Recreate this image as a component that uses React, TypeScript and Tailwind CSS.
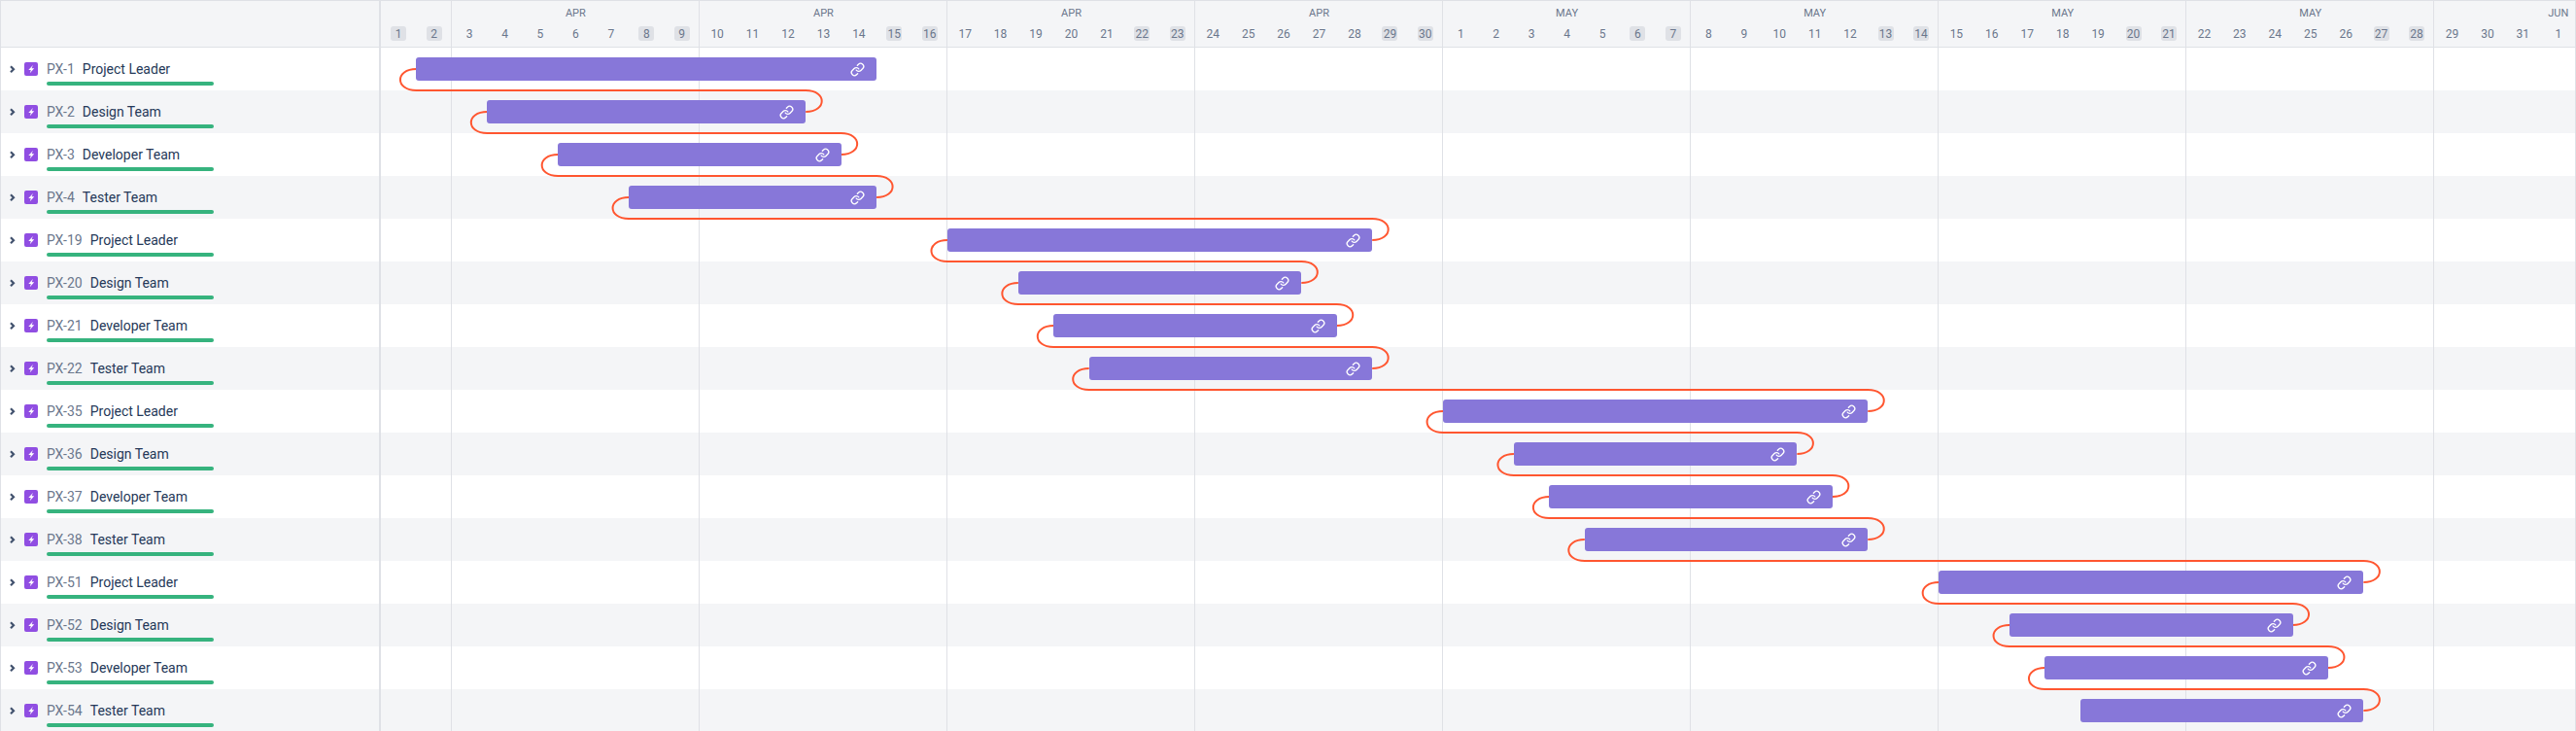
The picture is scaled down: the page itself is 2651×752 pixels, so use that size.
import { FC } from "react";
import { Link } from "lucide-react";

interface Task {
  id: number;
  name: string;
  start: number;
  end: number;
}

const DAY = 2259 / 62;
const ROW = 44;

const names = ["Project Leader", "Design Team", "Developer Team", "Tester Team"];
const ids = [1, 2, 3, 4, 19, 20, 21, 22, 35, 36, 37, 38, 51, 52, 53, 54];
const spans = [
  [1, 14], [3, 12], [5, 13], [7, 14],
  [16, 28], [18, 26], [19, 27], [20, 28],
  [30, 42], [32, 40], [33, 41], [34, 42],
  [44, 56], [46, 54], [47, 55], [48, 56],
];

const tasks: Task[] = ids.map((id, i) => ({
  id,
  name: names[i % 4],
  start: spans[i][0],
  end: spans[i][1],
}));

const weeks = [
  { label: "", days: ["1", "2"], off: ["1", "2"] },
  { label: "APR", days: ["3", "4", "5", "6", "7", "8", "9"], off: ["8", "9"] },
  { label: "APR", days: ["10", "11", "12", "13", "14", "15", "16"], off: ["15", "16"] },
  { label: "APR", days: ["17", "18", "19", "20", "21", "22", "23"], off: ["22", "23"] },
  { label: "APR", days: ["24", "25", "26", "27", "28", "29", "30"], off: ["29", "30"] },
  { label: "MAY", days: ["1", "2", "3", "4", "5", "6", "7"], off: ["6", "7"] },
  { label: "MAY", days: ["8", "9", "10", "11", "12", "13", "14"], off: ["13", "14"] },
  { label: "MAY", days: ["15", "16", "17", "18", "19", "20", "21"], off: ["20", "21"] },
  { label: "MAY", days: ["22", "23", "24", "25", "26", "27", "28"], off: ["27", "28"] },
  { label: "JUN", days: ["29", "30", "31", "1"], off: [] as string[] },
];

const EpicIcon: FC = () => (
  <svg width="14" height="14" viewBox="0 0 14 14" className="mt-[3px] shrink-0">
    <rect width="14" height="14" rx="2" fill="#904ee2" />
    <path d="M8.9 3 4.3 7.9h2.5l-1 3.3 4.4-5H7.6z" fill="#fff" />
  </svg>
);

const Chevron: FC = () => (
  <svg width="15" height="14" viewBox="0 0 15 14" className="mt-[3px] shrink-0">
    <path d="M1 4.3 4 7.3 1 10.3" fill="none" stroke="#42526e" strokeWidth="2.2" />
  </svg>
);

const TaskLabel: FC<{ task: Task; index: number }> = ({ task, index }) => (
  <div className={`flex h-11 items-start pl-[9px] pt-3 ${index % 2 ? "bg-[#f4f5f7]" : "bg-white"}`}>
    <Chevron />
    <EpicIcon />
    <div className="ml-[9px] w-[172px]">
      <div className="flex h-5 items-baseline gap-2 text-sm leading-5 whitespace-nowrap">
        <span className="text-[#6b778c]">PX-{task.id}</span>
        <span className="text-[#253858]">{task.name}</span>
      </div>
      <div className="mt-[3px] h-1 rounded-sm bg-[#36b37e]" />
    </div>
  </div>
);

const Connectors: FC = () => (
  <svg className="absolute inset-0 z-10 h-full w-full" fill="none" stroke="#ff5630" strokeWidth="2">
    {tasks.slice(0, -1).map((task, i) => {
      const left = task.start * DAY;
      const right = tasks[i + 1].end * DAY;
      const y = i * ROW + 22;
      return (
        <path
          key={task.id}
          d={`M${left} ${y}C${left - 22} ${y} ${left - 22} ${y + 22} ${left} ${y + 22}L${right} ${y + 22}C${right + 22} ${y + 22} ${right + 22} ${y + 44} ${right} ${y + 44}`}
        />
      );
    })}
  </svg>
);

export default function App() {
  return (
    <div className="flex h-[752px] w-[2651px] overflow-hidden bg-white font-['Roboto',sans-serif]">
      <div className="w-[392px] shrink-0 border-l border-r-2 border-[#dfe1e6]">
        <div className="h-[49px] border-y border-[#dfe1e6] bg-[#f4f5f7]" />
        {tasks.map((task, i) => (
          <TaskLabel key={task.id} task={task} index={i} />
        ))}
      </div>

      <div className="relative min-w-0 flex-1">
        <div className="grid h-[49px] grid-cols-[repeat(62,minmax(0,1fr))] border-y border-[#dfe1e6] bg-[#f4f5f7] text-xs text-[#6b778c]">
          {weeks.map((week, i) => (
            <div key={i} className="flex flex-col" style={{ gridColumn: `span ${week.days.length}` }}>
              <div className="h-[26px] text-center text-[11px] leading-[26px]">
                {i === weeks.length - 1 ? <div className="w-[255px]">{week.label}</div> : week.label}
              </div>
              <div className="flex flex-1">
                {week.days.map((day) => (
                  <div key={day} className="flex flex-1 justify-center">
                    <span
                      className={`flex h-[15px] w-4 items-center justify-center rounded-[3px] ${
                        week.off.includes(day) ? "bg-[#dfe1e6]" : ""
                      }`}
                    >
                      {day}
                    </span>
                  </div>
                ))}
              </div>
            </div>
          ))}
        </div>

        <div className="relative">
          {tasks.map((task, i) => (
            <div key={task.id} className={`h-11 ${i % 2 ? "bg-[#f4f5f7]" : "bg-white"}`} />
          ))}
          <Connectors />
          {tasks.map((task, i) => (
            <div
              key={task.id}
              className="absolute z-20 flex h-6 items-center justify-end rounded-[3px] bg-[#8777d9] pr-[12px]"
              style={{
                top: i * ROW + 10,
                left: task.start * DAY,
                width: (task.end - task.start) * DAY,
              }}
            >
              <Link size={15} color="#fff" strokeWidth={2.2} />
            </div>
          ))}
        </div>

        <div className="absolute inset-0 z-[5] grid grid-cols-[repeat(62,minmax(0,1fr))]">
          {weeks.map((week, i) => (
            <div
              key={i}
              className="border-r border-[#dfe1e6]"
              style={{ gridColumn: `span ${week.days.length}` }}
            />
          ))}
        </div>
      </div>
    </div>
  );
}
